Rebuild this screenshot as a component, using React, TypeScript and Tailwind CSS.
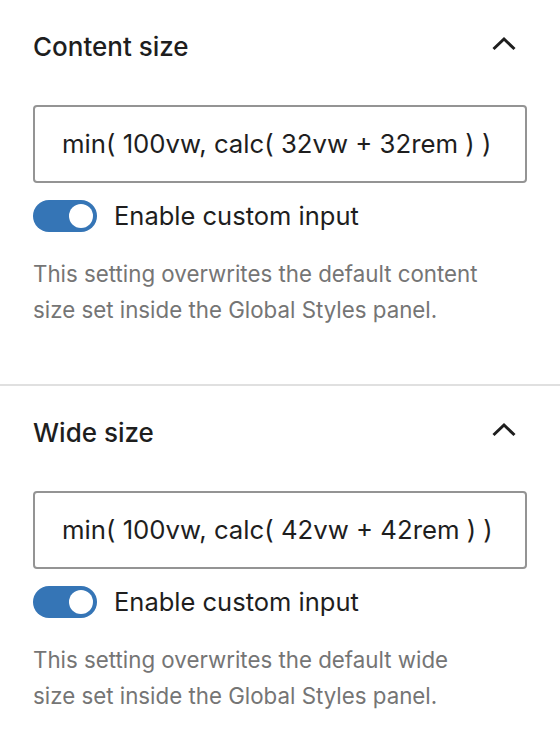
import React from "react";

function Chevron() {
  return (
    <svg width="48" height="48" viewBox="0 0 48 48" fill="none" className="shrink-0">
      <path d="M13.5 26 L24 16 L34.5 26" stroke="#1e1e1e" strokeWidth="3" strokeLinecap="butt" strokeLinejoin="miter" />
    </svg>
  );
}

function Toggle() {
  return (
    <div className="relative h-[32px] w-[64px] shrink-0 rounded-full bg-[#3575b6]">
      <div className="absolute right-[4px] top-[4px] h-[24px] w-[24px] rounded-full bg-white" />
    </div>
  );
}

function Section({ title, value, help, border }: { title: string; value: string; help: string[]; border?: boolean }) {
  return (
    <section className={`px-[33px] pt-[32px] ${border ? "pb-[56px] border-b-2 border-[#e0e0e0]" : "pb-[40px]"}`}>
      <div className="flex h-[30px] items-center justify-between">
        <h2 className="text-[26px] font-medium leading-[30px] text-[#1e1e1e]">{title}</h2>
        <div className="mr-[-1px]">
          <Chevron />
        </div>
      </div>
      <div className="mt-[43px] flex h-[78px] items-center rounded-[4px] border-2 border-[#949494] pl-[27px] pr-[10px]">
        <span className="whitespace-nowrap text-[25.75px] leading-[32px] text-[#1e1e1e]">{value}</span>
      </div>
      <div className="mt-[17px] flex items-center gap-[17px]">
        <Toggle />
        <span className="text-[25.5px] leading-[32px] text-[#1e1e1e]">Enable custom input</span>
      </div>
      <p className="mt-[24px] text-[22.3px] leading-[36px] text-[#757575]">
        {help[0]}
        <br />
        {help[1]}
      </p>
    </section>
  );
}

export default function App() {
  return (
    <div className="min-h-[740px] w-[560px] bg-white" style={{ fontFamily: "Inter, 'Noto Sans', sans-serif" }}>
      <Section
        title="Content size"
        value="min( 100vw, calc( 32vw + 32rem ) )"
        help={["This setting overwrites the default content", "size set inside the Global Styles panel."]}
        border
      />
      <Section
        title="Wide size"
        value="min( 100vw, calc( 42vw + 42rem ) )"
        help={["This setting overwrites the default wide", "size set inside the Global Styles panel."]}
      />
    </div>
  );
}
